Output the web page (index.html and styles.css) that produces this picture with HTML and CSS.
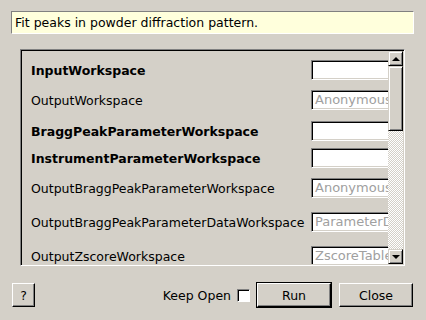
FILE: index.html
```html
<!DOCTYPE html>
<html lang="en">
<head>
    <meta charset="UTF-8">
    <title>FitPowderDiffPeaks</title>
    <link rel="stylesheet" href="styles.css">
</head>
<body>
    <div class="dialog">
        <div class="desc">Fit peaks in powder diffraction pattern.</div>
        <div class="frame">
            <div class="viewport">
                <div class="row"><span class="label bold">InputWorkspace</span><span class="field"></span></div>
                <div class="row"><span class="label">OutputWorkspace</span><span class="field">Anonymous</span></div>
                <div class="row"><span class="label bold">BraggPeakParameterWorkspace</span><span class="field"></span></div>
                <div class="row"><span class="label bold">InstrumentParameterWorkspace</span><span class="field"></span></div>
                <div class="row"><span class="label">OutputBraggPeakParameterWorkspace</span><span class="field">Anonymous</span></div>
                <div class="row"><span class="label">OutputBraggPeakParameterDataWorkspace</span><span class="field">ParameterData</span></div>
                <div class="row"><span class="label">OutputZscoreWorkspace</span><span class="field">ZscoreTable</span></div>
            </div>
            <div class="scrollbar">
                <div class="sb-btn"><span class="arrow-up"></span></div>
                <div class="sb-thumb"></div>
                <div class="sb-track"></div>
                <div class="sb-btn"><span class="arrow-down"></span></div>
            </div>
        </div>
        <div class="buttons">
            <button class="btn help">?</button>
            <span class="spacer"></span>
            <label class="keep">Keep Open <span class="check"></span></label>
            <span class="default"><button class="btn run">Run</button></span>
            <button class="btn close">Close</button>
        </div>
    </div>
</body>
</html>
```

FILE: styles.css
```css
body {
    margin: 0;
    background: #d4d0c8;
    font-family: "DejaVu Sans", sans-serif;
    font-size: 12.5px;
    color: #000;
}
.dialog {
    width: 426px;
    height: 320px;
    display: flex;
    flex-direction: column;
}
.desc {
    margin: 11px 12px 0 11px;
    height: 21px;
    line-height: 21px;
    padding-left: 3px;
    background: #ffffdc;
    border: 1px solid;
    border-color: #808080 #fff #fff #808080;
}
.frame {
    margin: 15px 21px 0 20px;
    height: 213px;
    display: flex;
    border: 1px solid;
    border-color: #808080 #fff #fff #808080;
    box-shadow: inset 1px 1px #000, inset -1px -1px #d4d0c8;
    padding: 1px;
}
.viewport {
    flex: 1;
    overflow: hidden;
    display: flex;
    flex-direction: column;
}
.row {
    display: grid;
    grid-template-columns: 280px 100px;
    align-items: center;
    padding-left: 9px;
    height: 20px;
    flex-shrink: 0;
}
.row:nth-child(1) { margin-top: 9px; }
.row:nth-child(2) { margin-top: 10px; }
.row:nth-child(3) { margin-top: 11px; }
.row:nth-child(4) { margin-top: 7px; }
.row:nth-child(5) { margin-top: 10px; }
.row:nth-child(6) { margin-top: 14px; }
.row:nth-child(7) { margin-top: 14px; }
.label {
    white-space: nowrap;
}
.bold {
    font-weight: bold;
}
.field {
    height: 20px;
    box-sizing: border-box;
    background: #fff;
    border: 1px solid;
    border-color: #808080 #fff #fff #808080;
    box-shadow: inset 1px 1px #000, inset -1px -1px #d4d0c8;
    padding-left: 3px;
    font-size: 13px;
    line-height: 18px;
    color: #a0a0a0;
    white-space: nowrap;
    overflow: hidden;
}
.scrollbar {
    width: 15px;
    display: flex;
    flex-direction: column;
}
.sb-btn, .sb-thumb {
    box-sizing: border-box;
    background: #d4d0c8;
    border: 1px solid;
    border-color: #d4d0c8 #000 #000 #d4d0c8;
    box-shadow: inset 1px 1px #fff, inset -1px -1px #808080;
}
.sb-btn {
    height: 15px;
    display: flex;
    align-items: center;
    justify-content: center;
}
.sb-thumb {
    height: 65px;
}
.sb-track {
    flex: 1;
    background: repeating-conic-gradient(#fff 0 25%, #d4d0c8 0 50%) 0 0 / 2px 2px;
}
.arrow-up {
    border-left: 4px solid transparent;
    border-right: 4px solid transparent;
    border-bottom: 4px solid #000;
}
.arrow-down {
    border-left: 4px solid transparent;
    border-right: 4px solid transparent;
    border-top: 4px solid #000;
}
.buttons {
    display: flex;
    align-items: center;
    margin: 16px 13px 0 12px;
    height: 26px;
}
.spacer {
    flex: 1;
}
.btn {
    font-family: "DejaVu Sans", sans-serif;
    font-size: 12.5px;
    color: #000;
    height: 24px;
    padding: 0;
    background: #d4d0c8;
    border: 1px solid;
    border-color: #fff #000 #000 #fff;
    box-shadow: inset -1px -1px #808080;
}
.help {
    width: 23px;
}
.keep {
    display: flex;
    align-items: center;
    gap: 6px;
    margin-right: 6px;
}
.check {
    width: 13px;
    height: 13px;
    box-sizing: border-box;
    background: #fff;
    border: 1px solid;
    border-color: #808080 #fff #fff #808080;
    box-shadow: inset 1px 1px #000;
}
.default {
    border: 1px solid #000;
    display: flex;
}
.run {
    width: 74px;
}
.close {
    width: 74px;
    margin-left: 7px;
}
```
